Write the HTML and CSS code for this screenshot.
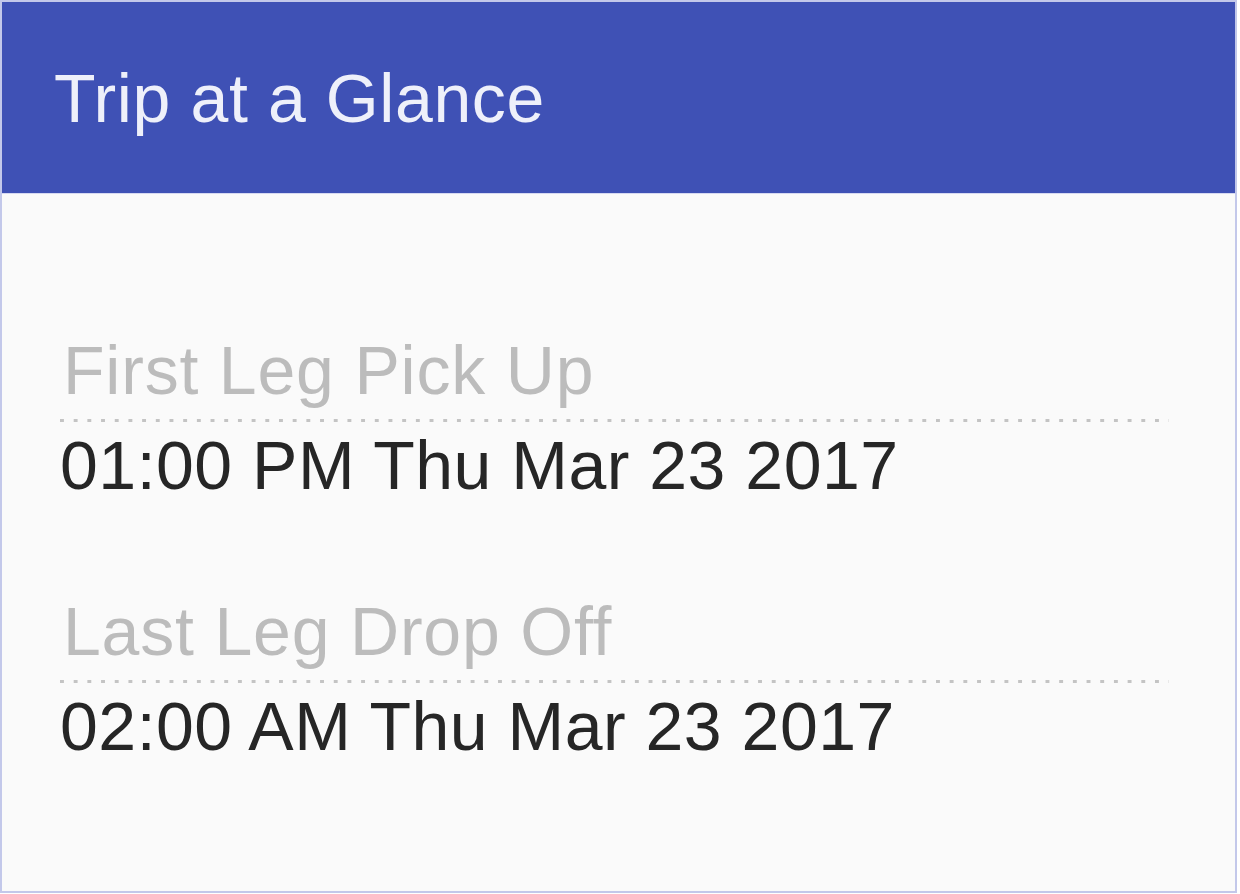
FILE: index.html
```html
<!DOCTYPE html>
<html lang="en">
<head>
<meta charset="utf-8">
<title>Trip at a Glance</title>
<link rel="stylesheet" href="styles.css">
</head>
<body>
<section class="card">
  <header class="card-header">
    <h1 class="card-title">Trip at a Glance</h1>
  </header>
  <div class="card-body">
    <div class="field">
      <div class="field-label">First Leg Pick Up</div>
      <div class="field-rule"></div>
      <div class="field-value">01:00 PM Thu Mar 23 2017</div>
    </div>
    <div class="field">
      <div class="field-label">Last Leg Drop Off</div>
      <div class="field-rule"></div>
      <div class="field-value">02:00 AM Thu Mar 23 2017</div>
    </div>
  </div>
</section>
</body>
</html>
```
FILE: styles.css
```css
html, body {
  margin: 0;
  padding: 0;
  background: #ffffff;
}

body {
  font-family: "Liberation Sans", Arial, Helvetica, sans-serif;
}

.card {
  box-sizing: border-box;
  width: 1237px;
  height: 893px;
  border: 2px solid #c3c8ea;
  background: #fafafa;
  display: flex;
  flex-direction: column;
}

.card-header {
  height: 191px;
  flex: 0 0 191px;
  background: #3f51b5;
  display: flex;
  align-items: center;
  padding-left: 52px;
  border-bottom: 1px solid #d6d9f1;
}

.card-title {
  margin: 0;
  font-size: 68px;
  line-height: 68px;
  font-weight: normal;
  color: #eef0fa;
  letter-spacing: 0.6px;
}

.card-body {
  padding: 142px 66px 0 58px;
  display: flex;
  flex-direction: column;
  gap: 98px;
}

.field {
  display: flex;
  flex-direction: column;
}

.field-label {
  font-size: 68px;
  line-height: 68px;
  color: #bcbcbc;
  padding-left: 3px;
  padding-bottom: 15px;
  letter-spacing: 0.8px;
}

.field-rule {
  height: 3px;
  background-image: linear-gradient(to right, #c4c4c4 0, #c4c4c4 4px, transparent 4px);
  background-size: 13.7px 3px;
  background-repeat: repeat-x;
}

.field-value {
  margin-top: 9px;
  font-size: 68px;
  line-height: 68px;
  color: #262626;
  letter-spacing: 0.5px;
}
```
